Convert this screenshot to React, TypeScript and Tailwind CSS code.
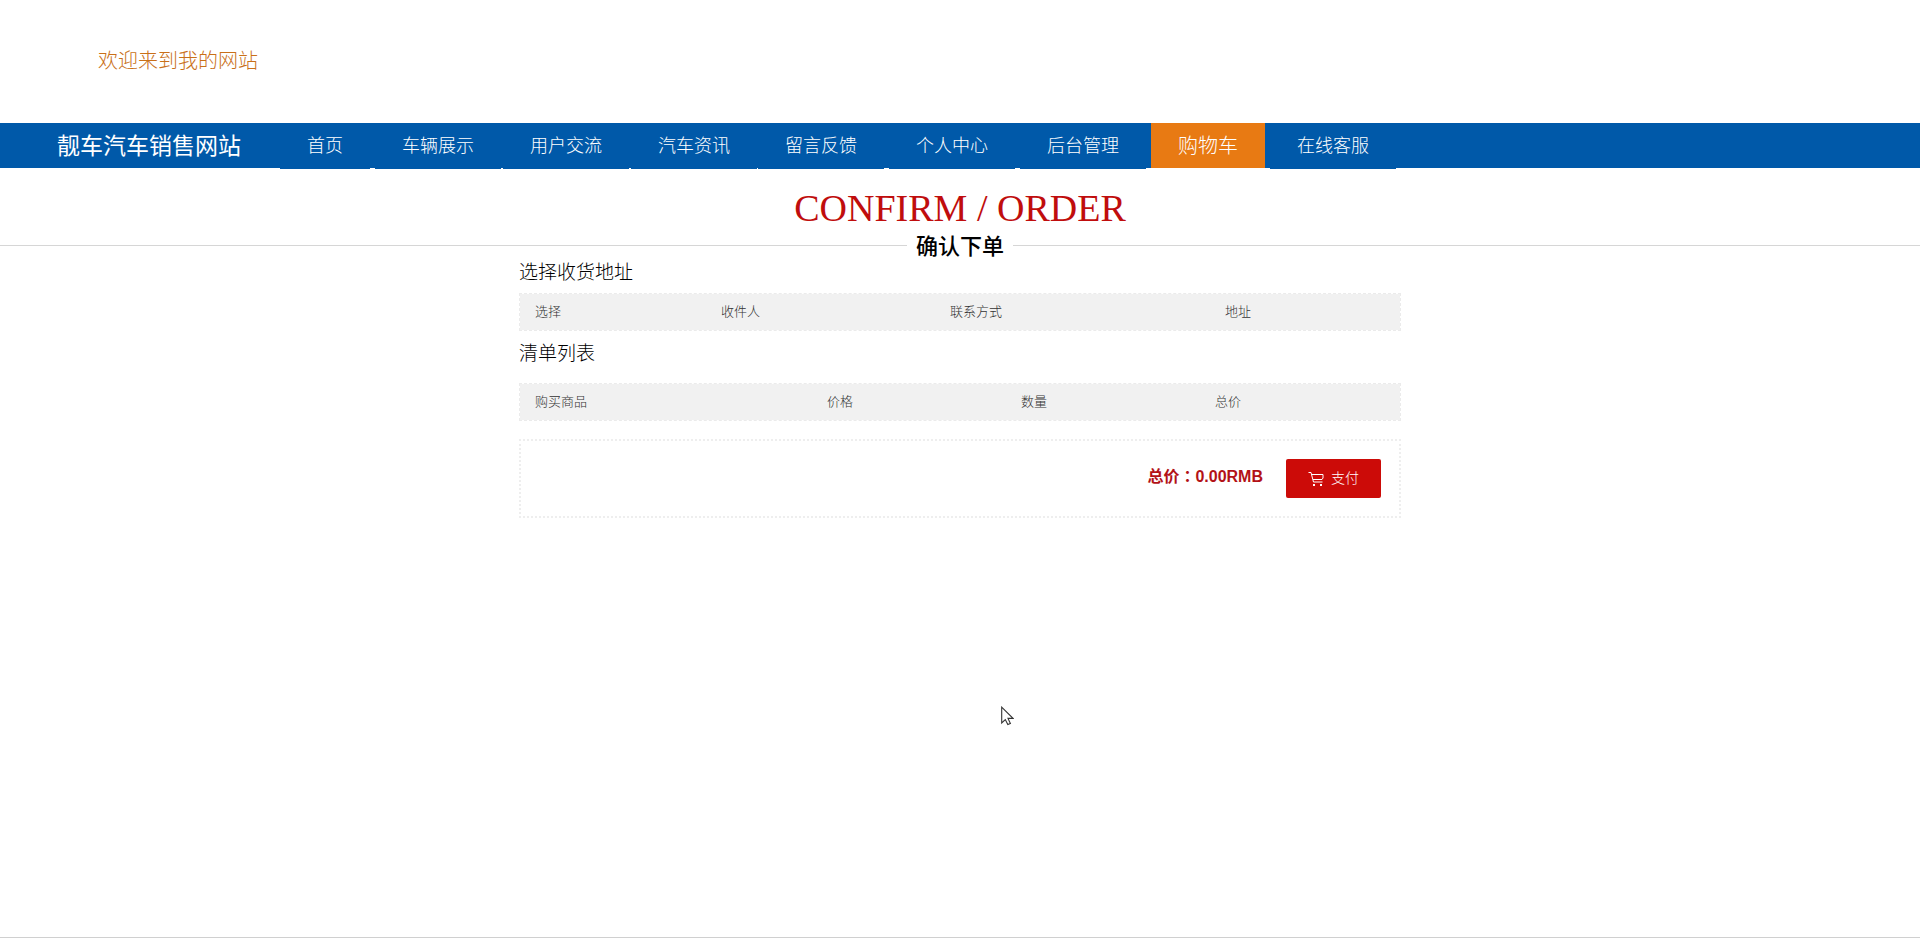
import React from "react";

type NavItem = { label: string; box: string; active?: boolean };

const navItems: NavItem[] = [
  { label: "首页", box: "w-[90px] mr-[5px]" },
  { label: "车辆展示", box: "w-[126px] mr-[2px]" },
  { label: "用户交流", box: "w-[126px] mr-[2px]" },
  { label: "汽车资讯", box: "w-[126px] mr-[1px]" },
  { label: "留言反馈", box: "w-[126px] mr-[5px]" },
  { label: "个人中心", box: "w-[126px] mr-[5px]" },
  { label: "后台管理", box: "w-[126px] mr-[5px]" },
  { label: "购物车", box: "w-[114px] mr-[5px]", active: true },
  { label: "在线客服", box: "w-[126px]" },
];

type Column = { label: string; width: string };

const addressColumns: Column[] = [
  { label: "选择", width: "w-[186px]" },
  { label: "收件人", width: "w-[229px]" },
  { label: "联系方式", width: "w-[275px]" },
  { label: "地址", width: "w-auto" },
];

const orderColumns: Column[] = [
  { label: "购买商品", width: "w-[292px]" },
  { label: "价格", width: "w-[194px]" },
  { label: "数量", width: "w-[194px]" },
  { label: "总价", width: "w-auto" },
];

function HeaderTable({ columns, label }: { columns: Column[]; label: string }) {
  return (
    <div className="border border-dashed border-[#ebebeb] bg-[#f1f1f1] bg-clip-padding">
      <table aria-label={label} className="w-full table-fixed">
        <thead>
          <tr className="h-9">
            {columns.map((c) => (
              <th
                key={c.label}
                scope="col"
                className={`${c.width} pl-[15px] text-left text-[13px] leading-5 font-light text-[#333]`}
              >
                {c.label}
              </th>
            ))}
          </tr>
        </thead>
      </table>
    </div>
  );
}

function CartIcon() {
  return (
    <svg
      width="16"
      height="14"
      viewBox="0 0 16 14"
      fill="none"
      stroke="currentColor"
      strokeWidth="1"
      aria-hidden="true"
    >
      <path d="M0.5 0.5h2.5l2.5 9.5h9" />
      <path d="M3.5 2.5h11.5v3.5l-1 1.5H5" />
      <rect x="5" y="12" width="2" height="2" fill="currentColor" stroke="none" />
      <rect x="12" y="12" width="2" height="2" fill="currentColor" stroke="none" />
    </svg>
  );
}

export default function App() {
  return (
    <div className="relative flex min-h-screen flex-col bg-white font-['Liberation_Sans','Noto_Sans_CJK_SC',sans-serif] text-black">
      <header>
        <div className="flex h-[123px] items-center pb-[2px] pl-[98px]">
          <p className="text-[20px] leading-8 font-light text-[#c96f18]">欢迎来到我的网站</p>
        </div>
        <nav className="flex h-[45px] items-start bg-[#0059a9] text-white">
          <a href="#" className="w-[280px] pl-[57px] text-[23px] leading-[47px] font-normal">
            靓车汽车销售网站
          </a>
          {navItems.map((item) => (
            <a
              key={item.label}
              href="#"
              className={`${item.box} shrink-0 text-center font-light ${
                item.active
                  ? "h-[45px] bg-[#e87a13] text-[20px] leading-[47px]"
                  : "h-[46px] bg-[#0059a9] text-[18px] leading-[47px]"
              }`}
            >
              {item.label}
            </a>
          ))}
        </nav>
      </header>

      <main>
        <div className="pt-4 text-center">
          <h1 className="font-['Liberation_Serif',serif] text-[38px] leading-[48px] text-[#c00d0d]">
            CONFIRM / ORDER
          </h1>
          <div className="flex h-[27px] items-center">
            <span className="h-px flex-1 bg-[#d6d6d6]" />
            <h2 className="px-[9px] pt-[2px] text-[22px] leading-[27px] font-medium">确认下单</h2>
            <span className="h-px flex-1 bg-[#d6d6d6]" />
          </div>
        </div>

        <div className="mx-auto w-full max-w-[882px]">
          <h3 className="pb-[7px] text-[19px] leading-[27px] font-light">选择收货地址</h3>
          <HeaderTable columns={addressColumns} label="选择收货地址" />
          <h3 className="pt-[9px] pb-4 text-[19px] leading-[27px] font-light">清单列表</h3>
          <HeaderTable columns={orderColumns} label="清单列表" />

          <div className="mt-[18px] flex h-[79px] items-center justify-end gap-[23px] border-2 border-dotted border-[#eee] pr-[18px]">
            <p className="pb-[6px] text-[16px] leading-6 font-bold text-[#b31217]">
              总价<span className="font-['Noto_Sans_CJK_TC',sans-serif]">：</span>0.00RMB
            </p>
            <button
              type="button"
              className="flex h-[39px] w-[95px] items-center justify-center gap-[7px] rounded-[2px] bg-[#cc0b08] text-[14px] font-light text-white"
            >
              <CartIcon />
              支付
            </button>
          </div>
        </div>
      </main>

      <footer className="mt-auto border-t border-[#d0d0d0]" />

      <svg
        className="pointer-events-none absolute top-[706px] left-[1001px]"
        width="13"
        height="20"
        viewBox="0 0 13 20"
        aria-hidden="true"
      >
        <path
          d="M0.7 1.2V17l3.6-3.4 2.5 5 2.6-1.2-2.4-5h5z"
          fill="#fff"
          stroke="#333"
          strokeWidth="1.1"
        />
      </svg>
    </div>
  );
}
